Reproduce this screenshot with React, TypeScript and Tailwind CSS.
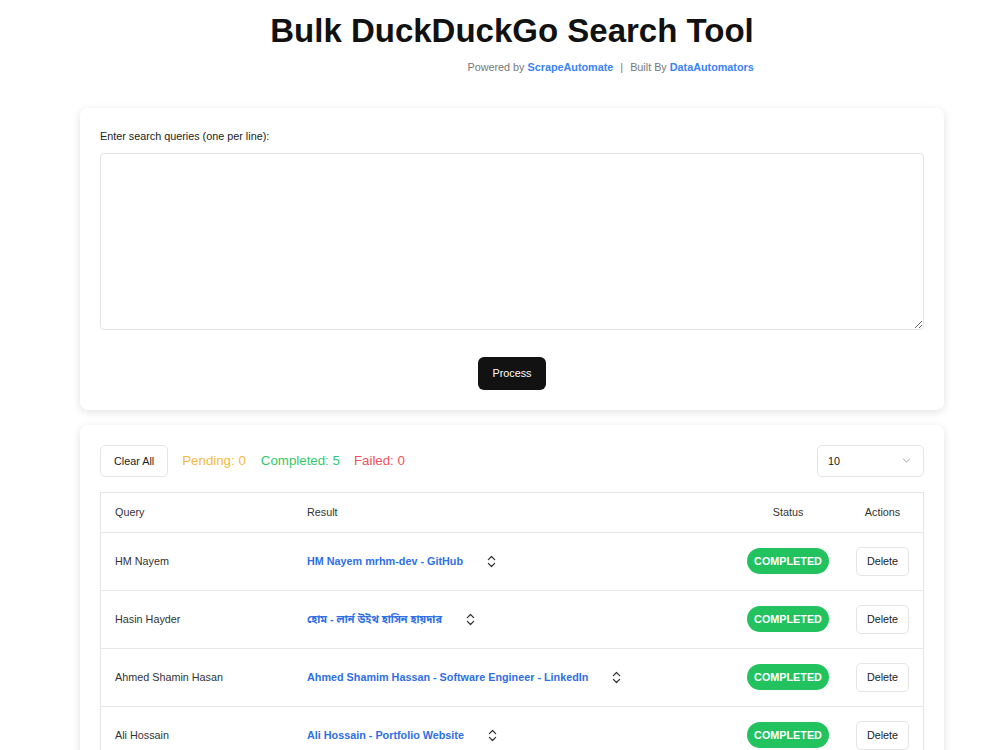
import React from "react";
import { ChevronsUpDown, ChevronDown } from "lucide-react";

const rows = [
  { q: "HM Nayem", r: "HM Nayem mrhm-dev - GitHub" },
  { q: "Hasin Hayder", r: "হোম - লার্ন উইথ হাসিন হায়দার" },
  { q: "Ahmed Shamin Hasan", r: "Ahmed Shamim Hassan - Software Engineer - LinkedIn" },
  { q: "Ali Hossain", r: "Ali Hossain - Portfolio Website" },
  { q: "Jhankar Mahbub", r: "Jhankar Mahbub - Programming Hero" },
];

const cols = "grid grid-cols-[192px_440px_110px_79px]";

export default function App() {
  return (
    <div
      className="min-h-screen bg-white text-[#333] pl-6"
      style={{ fontFamily: '"Liberation Sans", Arial, "Noto Sans", "Noto Sans CJK SC", sans-serif' }}
    >
      <div className="mx-auto w-[864px] flex flex-col items-center">
        <div className="mt-[11px] flex flex-col">
          <h1 className="text-[33px] leading-[1.2] font-bold text-[#111]">Bulk DuckDuckGo Search Tool</h1>
          <p className="mt-[8px] text-right text-[10.8px] leading-[16px] text-[#777]">
            Powered by <span className="font-bold text-[#3b82f6]">ScrapeAutomate</span>
            <span className="mx-[7px]">|</span>
            Built By <span className="font-bold text-[#3b82f6]">DataAutomators</span>
          </p>
        </div>

        <div className="mt-[33px] w-full rounded-lg bg-white p-5 shadow-[0_2px_8px_rgba(0,0,0,0.12)]">
          <label className="block text-[10.8px] leading-[16px] text-[#222]">Enter search queries (one per line):</label>
          <textarea className="mt-[9px] block h-[177px] w-full rounded-[4px] border border-[#e3e3e3] bg-white outline-none" />
          <div className="mt-[27px] flex justify-center">
            <button className="h-[33px] rounded-[6px] bg-[#121212] px-[14px] text-[10.8px] text-white">Process</button>
          </div>
        </div>

        <div className="mt-[15px] w-full rounded-lg bg-white p-5 shadow-[0_2px_8px_rgba(0,0,0,0.12)]">
          <div className="flex items-center">
            <button className="h-[32px] rounded-[5px] border border-[#e5e5e5] bg-white px-[13px] text-[10.8px] text-[#222]">Clear All</button>
            <span className="ml-[14px] text-[13.3px] text-[#f5b93e]">Pending: 0</span>
            <span className="ml-[15px] text-[13.3px] text-[#35c96c]">Completed: 5</span>
            <span className="ml-[14px] text-[13.3px] text-[#f0525c]">Failed: 0</span>
            <div className="ml-auto flex h-[32px] w-[107px] items-center justify-between rounded-[5px] border border-[#e5e5e5] pl-[10px] pr-[10px] text-[10.8px] text-[#222]">
              <span>10</span>
              <ChevronDown size={13} className="text-[#888]" strokeWidth={1.5} />
            </div>
          </div>

          <div className="mt-[15px] border border-[#e5e5e5] text-[10.8px]">
            <div className={`${cols} h-[40px] items-center border-b border-[#e5e5e5] text-[#333]`}>
              <div className="px-[14px]">Query</div>
              <div className="px-[14px]">Result</div>
              <div className="text-center">Status</div>
              <div className="text-center">Actions</div>
            </div>
            {rows.map((r, i) => (
              <div key={i} className={`${cols} h-[58px] items-center border-b border-[#e8e8e8]`}>
                <div className="px-[14px] text-[#333]">{r.q}</div>
                <div className="flex items-center gap-[21px] px-[14px]">
                  <span
                    className="font-bold text-[#2f6fe4]"
                    style={{ fontFamily: '"Liberation Sans", Arial, "Noto Sans Bengali", "Noto Sans", sans-serif' }}
                  >
                    {r.r}
                  </span>
                  <ChevronsUpDown size={15} strokeWidth={2} className="text-[#333]" />
                </div>
                <div className="flex justify-center">
                  <span className="rounded-full bg-[#22c35e] px-[7px] py-[6px] text-[10.8px] font-bold leading-[14px] text-white">COMPLETED</span>
                </div>
                <div className="flex justify-center">
                  <button className="h-[29px] rounded-[5px] border border-[#e5e5e5] bg-white px-[10px] text-[10.8px] text-[#222]">Delete</button>
                </div>
              </div>
            ))}
          </div>
        </div>
      </div>
    </div>
  );
}
